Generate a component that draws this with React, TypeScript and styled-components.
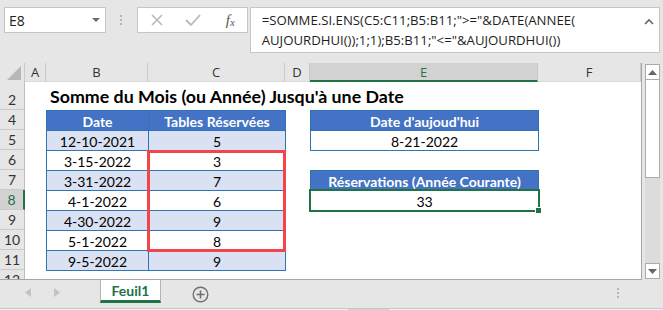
import React from 'react';
import styled, { createGlobalStyle } from 'styled-components';

const GlobalStyle = createGlobalStyle`
  html, body {
    margin: 0;
    padding: 0;
    background: #e6e6e6;
  }
  body {
    font-family: 'Lato', 'Liberation Sans', sans-serif;
  }
`;

type Kind = 'head' | 'band' | 'plain';
type Fit = 'tall' | 'cut' | 'normal';

type TableRow = {
  date: string;
  count: string;
  kind: Kind;
};

const tableRows: TableRow[] = [
  { date: 'Date', count: 'Tables Réservées', kind: 'head' },
  { date: '12-10-2021', count: '5', kind: 'band' },
  { date: '3-15-2022', count: '3', kind: 'plain' },
  { date: '3-31-2022', count: '7', kind: 'band' },
  { date: '4-1-2022', count: '6', kind: 'plain' },
  { date: '4-30-2022', count: '9', kind: 'band' },
  { date: '5-1-2022', count: '8', kind: 'plain' },
  { date: '9-5-2022', count: '9', kind: 'band' },
];

const columns = ['A', 'B', 'C', 'D', 'E', 'F'];
const rowNumbers = ['2', '4', '5', '6', '7', '8', '9', '10', '11', '12'];

const fitFor = (n: string): Fit => (n === '2' ? 'tall' : n === '12' ? 'cut' : 'normal');

const App = () => {
  return (
    <>
      <GlobalStyle />
      <Window>
        <FormulaBar>
          <NameBox>
            <span>E8</span>
            <DropArrow />
          </NameBox>
          <Grip>
            <Dot />
            <Dot />
            <Dot />
          </Grip>
          <IconBox>
            <svg width="14" height="14" viewBox="0 0 14 14">
              <path d="M2 2 L12 12 M12 2 L2 12" stroke="#b9b9b9" strokeWidth="1.6" fill="none" />
            </svg>
            <svg width="18" height="14" viewBox="0 0 18 14">
              <path d="M2 7 L7 12 L16 2" stroke="#b9b9b9" strokeWidth="1.8" fill="none" />
            </svg>
            <FxLabel>
              f<sub>x</sub>
            </FxLabel>
          </IconBox>
          <FormulaBox>
            <FormulaText>
              <div>=SOMME.SI.ENS(C5:C11;B5:B11;"&gt;="&amp;DATE(ANNEE(</div>
              <div>AUJOURDHUI());1;1);B5:B11;"&lt;="&amp;AUJOURDHUI())</div>
            </FormulaText>
            <svg width="10" height="8" viewBox="0 0 10 8">
              <path d="M1 6 L5 2 L9 6" stroke="#666" strokeWidth="1.6" fill="none" />
            </svg>
          </FormulaBox>
        </FormulaBar>

        <Main>
          <Sheet>
            <Corner>
              <svg width="14" height="14" viewBox="0 0 14 14">
                <polygon points="14,0 14,14 0,14" fill="#b7b7b7" />
              </svg>
            </Corner>
            {columns.map((c) => (
              <ColHeader key={c} $selected={c === 'E'}>
                {c}
              </ColHeader>
            ))}
            {rowNumbers.map((n, i) => (
              <RowHeader key={n} $row={i + 2} $selected={n === '8'} $fit={fitFor(n)}>
                {n}
              </RowHeader>
            ))}

            <Title>Somme du Mois (ou Année) Jusqu'à une Date</Title>

            {tableRows.map((r, i) => (
              <React.Fragment key={r.date}>
                <Cell $col={3} $row={i + 3} $kind={r.kind}>
                  {r.date}
                </Cell>
                <Cell $col={4} $row={i + 3} $kind={r.kind}>
                  {r.count}
                </Cell>
              </React.Fragment>
            ))}

            <Cell $col={6} $row={3} $kind="head">
              Date d'aujoud'hui
            </Cell>
            <Cell $col={6} $row={4} $kind="plain">
              8-21-2022
            </Cell>
            <Cell $col={6} $row={6} $kind="head">
              Réservations (Année Courante)
            </Cell>
            <Cell $col={6} $row={7} $kind="plain">
              33
            </Cell>

            <Highlight />
            <Selection>
              <FillHandle />
            </Selection>
          </Sheet>

          <VScroll>
            <ScrollButton>
              <svg width="9" height="5" viewBox="0 0 9 5">
                <polygon points="0,5 9,5 4.5,0" fill="#666" />
              </svg>
            </ScrollButton>
            <Thumb />
            <Track />
            <ScrollButton>
              <svg width="9" height="5" viewBox="0 0 9 5">
                <polygon points="0,0 9,0 4.5,5" fill="#666" />
              </svg>
            </ScrollButton>
          </VScroll>
        </Main>

        <TabBar>
          <TabNav>
            <svg width="6" height="9" viewBox="0 0 6 9">
              <polygon points="6,0 6,9 0,4.5" fill="#c3c3c3" />
            </svg>
            <svg width="6" height="9" viewBox="0 0 6 9">
              <polygon points="0,0 0,9 6,4.5" fill="#c3c3c3" />
            </svg>
          </TabNav>
          <SheetTab>Feuil1</SheetTab>
          <AddSheet>
            <svg width="17" height="17" viewBox="0 0 17 17">
              <circle cx="8.5" cy="8.5" r="7.3" stroke="#6f6f6f" strokeWidth="1.4" fill="none" />
              <path d="M8.5 4.5 V12.5 M4.5 8.5 H12.5" stroke="#6f6f6f" strokeWidth="1.6" />
            </svg>
          </AddSheet>
          <Spacer />
          <Grip>
            <Dot />
            <Dot />
            <Dot />
          </Grip>
        </TabBar>
        <StatusLine>
          <StatusThumb />
        </StatusLine>
      </Window>
    </>
  );
};

const Window = styled.div`
  width: 663px;
  height: 310px;
  overflow: hidden;
  background: #e6e6e6;
  display: flex;
  flex-direction: column;
`;

const FormulaBar = styled.div`
  height: 63px;
  flex: none;
  box-sizing: border-box;
  display: flex;
  align-items: flex-start;
  padding: 7px 3px 0 4px;
  font-family: 'Open Sans', 'Noto Sans', sans-serif;
`;

const NameBox = styled.div`
  width: 102px;
  height: 26px;
  box-sizing: border-box;
  background: #fff;
  border: 1px solid #c6c6c6;
  display: flex;
  align-items: center;
  justify-content: space-between;
  padding: 0 5px 0 4px;
  font-size: 14px;
  color: #222;
`;

const DropArrow = styled.span`
  width: 0;
  height: 0;
  border-left: 4px solid transparent;
  border-right: 4px solid transparent;
  border-top: 4px solid #6b6b6b;
`;

const Grip = styled.div`
  width: 31px;
  height: 26px;
  display: flex;
  flex-direction: column;
  align-items: center;
  justify-content: center;
  gap: 2px;
`;

const Dot = styled.span`
  width: 2px;
  height: 2px;
  background: #b5b5b5;
`;

const IconBox = styled.div`
  width: 111px;
  height: 26px;
  box-sizing: border-box;
  background: #fff;
  border: 1px solid #c6c6c6;
  display: flex;
  align-items: center;
  gap: 20px;
  padding-left: 12px;
`;

const FxLabel = styled.span`
  font-family: 'Liberation Serif', serif;
  font-style: italic;
  font-size: 15px;
  color: #555;
  margin-left: 4px;

  sub {
    font-size: 11px;
    vertical-align: -1px;
  }
`;

const FormulaBox = styled.div`
  width: 411px;
  height: 46px;
  margin-left: 2px;
  box-sizing: border-box;
  background: #fff;
  border: 1px solid #c6c6c6;
  display: flex;
  align-items: flex-start;
  justify-content: space-between;
  padding: 2px 5px 0 11px;

  svg {
    margin-top: 8px;
  }
`;

const FormulaText = styled.div`
  font-size: 13.2px;
  line-height: 20px;
  color: #1e1e1e;
  white-space: nowrap;
`;

const Main = styled.div`
  display: flex;
  height: 217px;
  flex: none;
`;

const Sheet = styled.div`
  width: 641px;
  border-right: 1px solid #a6a6a6;
  border-bottom: 1px solid #a6a6a6;
  background: #fff;
  display: grid;
  grid-template-columns: 25px 21px 102px 137px 25px 228px 103px;
  grid-template-rows: 19px 28px repeat(8, 20px) 9px;
  overflow: hidden;
`;

const Corner = styled.div`
  grid-column: 1;
  grid-row: 1;
  background: #e6e6e6;
  border-right: 1px solid #c9c9c9;
  display: flex;
  align-items: flex-end;
  justify-content: flex-end;
  padding: 0 3px 2px 0;
`;

const ColHeader = styled.div<{ $selected: boolean }>`
  grid-row: 1;
  box-sizing: border-box;
  background: ${({ $selected }) => ($selected ? '#d2d2d2' : '#e6e6e6')};
  color: ${({ $selected }) => ($selected ? '#217346' : '#333')};
  border-right: 1px solid #c9c9c9;
  border-bottom: ${({ $selected }) => ($selected ? '2px solid #217346' : '1px solid #d9d9d9')};
  font-family: 'Open Sans', 'Noto Sans', sans-serif;
  font-size: 13px;
  display: flex;
  align-items: center;
  justify-content: center;
  padding-top: ${({ $selected }) => ($selected ? '1px' : '0')};
`;

const RowHeader = styled.div<{ $row: number; $selected: boolean; $fit: Fit }>`
  grid-column: 1;
  grid-row: ${({ $row }) => $row};
  box-sizing: border-box;
  background: ${({ $selected }) => ($selected ? '#d2d2d2' : '#e6e6e6')};
  color: ${({ $selected }) => ($selected ? '#217346' : '#333')};
  border-right: ${({ $selected }) => ($selected ? '2px solid #217346' : '1px solid #bdbdbd')};
  border-bottom: ${({ $fit }) => ($fit === 'cut' ? 'none' : '1px solid #c9c9c9')};
  font-size: 14px;
  line-height: ${({ $fit }) => ($fit === 'cut' ? '9px' : 'normal')};
  display: flex;
  align-items: ${({ $fit }) => ($fit === 'tall' ? 'flex-end' : $fit === 'cut' ? 'flex-start' : 'center')};
  justify-content: center;
  padding-bottom: ${({ $fit }) => ($fit === 'tall' ? '1px' : '0')};
  padding-top: ${({ $fit }) => ($fit === 'cut' ? '5px' : '0')};
  overflow: hidden;
`;

const Title = styled.div`
  grid-column: 3 / 8;
  grid-row: 2;
  align-self: end;
  padding: 0 0 3px 4px;
  font-size: 17.8px;
  font-weight: 700;
  color: #000;
  white-space: nowrap;
`;

const Cell = styled.div<{ $col: number; $row: number; $kind: Kind }>`
  grid-column: ${({ $col }) => $col};
  grid-row: ${({ $row }) => $row};
  margin: 0 -1px -1px 0;
  border: 1px solid #2e75b6;
  background: ${({ $kind }) => ($kind === 'head' ? '#4472c4' : $kind === 'band' ? '#d9e1f2' : '#fff')};
  color: ${({ $kind }) => ($kind === 'head' ? '#fff' : '#000')};
  font-weight: ${({ $kind }) => ($kind === 'head' ? 700 : 400)};
  font-size: 14px;
  display: flex;
  align-items: center;
  justify-content: center;
  padding-top: 1px;
  box-sizing: border-box;
  white-space: nowrap;
`;

const Highlight = styled.div`
  grid-column: 4;
  grid-row: 5 / 10;
  margin: 0 -1px -2px -1px;
  border: 3px solid #f2454b;
  z-index: 2;
`;

const Selection = styled.div`
  grid-column: 6;
  grid-row: 7;
  margin: -1px -2px -2px -1px;
  border: 2px solid #217346;
  position: relative;
  z-index: 3;
`;

const FillHandle = styled.span`
  position: absolute;
  right: -4px;
  bottom: -4px;
  width: 5px;
  height: 5px;
  background: #217346;
  border: 1px solid #fff;
`;

const VScroll = styled.div`
  width: 21px;
  display: flex;
  flex-direction: column;
  padding: 1px 0 1px 3px;
  box-sizing: border-box;
`;

const ScrollButton = styled.div`
  width: 15px;
  height: 16px;
  box-sizing: border-box;
  border: 1px solid #ababab;
  background: #fff;
  display: flex;
  align-items: center;
  justify-content: center;
  flex: none;
`;

const Thumb = styled.div`
  width: 15px;
  height: 98px;
  box-sizing: border-box;
  border: 1px solid #ababab;
  border-top: none;
  background: #fff;
  flex: none;
`;

const Track = styled.div`
  flex: 1;
  width: 15px;
  background: #dcdcdc;
`;

const TabBar = styled.div`
  height: 28px;
  flex: none;
  display: flex;
  align-items: flex-start;
  padding-right: 30px;
`;

const TabNav = styled.div`
  width: 100px;
  height: 24px;
  display: flex;
  align-items: center;
  gap: 23px;
  padding-left: 25px;
  box-sizing: border-box;
`;

const SheetTab = styled.div`
  width: 61px;
  height: 23px;
  box-sizing: border-box;
  background: #fff;
  border-left: 1px solid #b4b4b4;
  border-right: 1px solid #b4b4b4;
  border-bottom: 3px solid #217346;
  color: #217346;
  font-weight: 700;
  font-size: 14px;
  display: flex;
  align-items: center;
  justify-content: center;
  padding-top: 1px;
`;

const AddSheet = styled.div`
  margin-left: 31px;
  height: 28px;
  display: flex;
  align-items: center;
`;

const Spacer = styled.div`
  flex: 1;
`;

const StatusLine = styled.div`
  flex: 1;
  border-top: 1px solid #c6c6c6;
  background: #f3f3f3;
  position: relative;
`;

const StatusThumb = styled.span`
  position: absolute;
  left: 348px;
  top: 0;
  width: 41px;
  height: 2px;
  background: #d0d0d0;
`;

export default App;
